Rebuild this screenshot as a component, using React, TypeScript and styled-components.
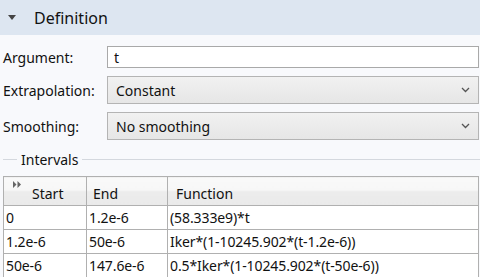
import React from "react";
import styled, { createGlobalStyle } from "styled-components";

const Global = createGlobalStyle`
  html, body {
    margin: 0;
    padding: 0;
    background: #f8f9fc;
    font-family: "Noto Sans", "Open Sans", sans-serif;
    color: #111;
  }
`;

const Page = styled.div`
  width: 480px;
  height: 277px;
  overflow: hidden;
`;

const Header = styled.div`
  height: 35px;
  background: #dde6f1;
  display: flex;
  align-items: center;
  padding-left: 8px;
  font-size: 16px;
  & svg {
    margin-right: 18px;
  }
`;

const Form = styled.div`
  display: grid;
  grid-template-columns: 104px 1fr;
  row-gap: 8px;
  align-items: center;
  padding: 11px 1px 0 3px;
  font-size: 14px;
`;

const Label = styled.div``;

const TextBox = styled.div`
  height: 22px;
  box-sizing: border-box;
  border: 1px solid #a9a9a9;
  background: #fff;
  padding: 0 6px;
  display: flex;
  align-items: center;
`;

const Combo = styled.div`
  height: 28px;
  box-sizing: border-box;
  border: 1px solid #b4b4b4;
  background: linear-gradient(#f1f1f1, #e6e6e6);
  padding: 0 8px 0 8px;
  display: flex;
  align-items: center;
  justify-content: space-between;
`;

const Legend = styled.div`
  display: flex;
  align-items: center;
  height: 18px;
  margin: 10px 0 8px 3px;
  font-size: 14px;
  &::before {
    content: "";
    width: 14px;
    border-top: 1px solid #d4d8de;
  }
  &::after {
    content: "";
    flex: 1;
    border-top: 1px solid #d4d8de;
  }
  & span {
    padding: 0 4px;
  }
`;

const Table = styled.table`
  margin-left: 3px;
  width: 476px;
  border-collapse: collapse;
  table-layout: fixed;
  font-size: 14px;
  background: #fff;
`;

const Th = styled.th<{ $pad: number }>`
  height: 29px;
  box-sizing: border-box;
  text-align: left;
  font-weight: normal;
  padding: 4px 0 0 ${(p) => p.$pad}px;
  border: 1px solid #b0b0b0;
  background: linear-gradient(#f9f9f9 0%, #f7f7f7 45%, #ececec 50%, #eaeaea 100%);
  position: relative;
  & svg {
    position: absolute;
    left: 9px;
    top: 4px;
  }
`;

const Td = styled.td`
  height: 24px;
  box-sizing: border-box;
  padding: 0 0 0 2px;
  border: 1px solid #b0b0b0;
  white-space: nowrap;
  letter-spacing: -0.1px;
`;

const Triangle = () => (
  <svg width="8" height="5" viewBox="0 0 8 5">
    <path d="M0 0 L8 0 L4 5 Z" fill="#444" />
  </svg>
);

const Chevron = () => (
  <svg width="9" height="6" viewBox="0 0 9 6">
    <path d="M1 1 L4.5 4.5 L8 1" stroke="#555" strokeWidth="1.3" fill="none" />
  </svg>
);

const FastForward = () => (
  <svg width="8" height="7" viewBox="0 0 8 7">
    <path d="M0 0 L3.5 3.5 L0 7 Z M4.5 0 L8 3.5 L4.5 7 Z" fill="#666" />
  </svg>
);

const rows = [
  ["0", "1.2e-6", "(58.333e9)*t"],
  ["1.2e-6", "50e-6", "Iker*(1-10245.902*(t-1.2e-6))"],
  ["50e-6", "147.6e-6", "0.5*Iker*(1-10245.902*(t-50e-6))"],
];

export default function App() {
  return (
    <Page>
      <Global />
      <Header>
        <Triangle />
        Definition
      </Header>
      <Form>
        <Label>Argument:</Label>
        <TextBox>t</TextBox>
        <Label>Extrapolation:</Label>
        <Combo>
          Constant
          <Chevron />
        </Combo>
        <Label>Smoothing:</Label>
        <Combo>
          No smoothing
          <Chevron />
        </Combo>
      </Form>
      <Legend>
        <span>Intervals</span>
      </Legend>
      <Table>
        <colgroup>
          <col style={{ width: 83 }} />
          <col style={{ width: 81 }} />
          <col />
        </colgroup>
        <thead>
          <tr>
            <Th $pad={28}>
              <FastForward />
              Start
            </Th>
            <Th $pad={6}>End</Th>
            <Th $pad={8}>Function</Th>
          </tr>
        </thead>
        <tbody>
          {rows.map((r) => (
            <tr key={r[0]}>
              {r.map((c, i) => (
                <Td key={i}>{c}</Td>
              ))}
            </tr>
          ))}
        </tbody>
      </Table>
    </Page>
  );
}
